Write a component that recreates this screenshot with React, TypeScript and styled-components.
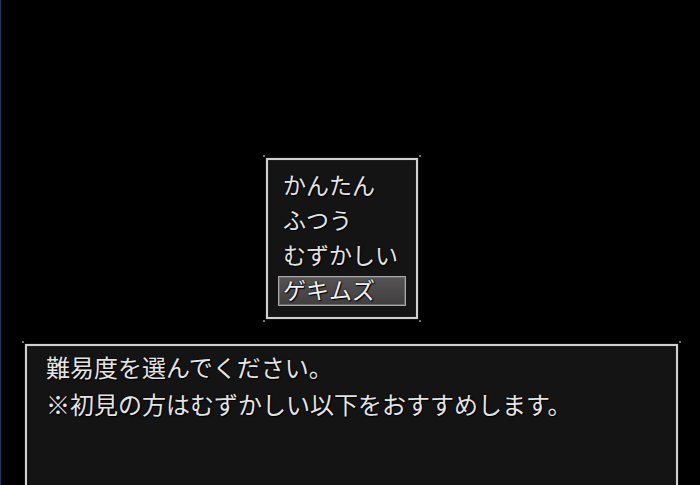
import React from "react";
import styled, { createGlobalStyle } from "styled-components";

const Global = createGlobalStyle`
  html, body {
    margin: 0;
    padding: 0;
    background: #000;
  }
  body {
    font-family: "Noto Sans CJK JP", "Noto Sans", sans-serif;
  }
`;

const Screen = styled.div`
  width: 700px;
  height: 485px;
  box-sizing: border-box;
  border-left: 1px solid #143a6c;
  background: #000;
  overflow: hidden;
  display: flex;
  flex-direction: column;
`;

const Frame = styled.div<{ $w: number; $h?: number }>`
  position: relative;
  box-sizing: border-box;
  width: ${(p) => p.$w}px;
  ${(p) => (p.$h ? `height: ${p.$h}px;` : "")}
  border: 2px solid #cfcfcf;
  box-shadow: 0 0 1px 0 #777, inset 0 0 1px 0 #777;
  background: #141414;
  color: #e4e4e4;
  text-shadow: 0 0 2px #000, 1px 1px 1px #000;
`;

const Dot = styled.span<{ $x: "left" | "right"; $y: "top" | "bottom" }>`
  position: absolute;
  width: 2px;
  height: 2px;
  border-radius: 1px;
  background: #9a9a9a;
  ${(p) => p.$x}: -5px;
  ${(p) => p.$y}: -5px;
`;

const Corners = () => (
  <>
    <Dot $x="left" $y="top" />
    <Dot $x="right" $y="top" />
    <Dot $x="left" $y="bottom" />
    <Dot $x="right" $y="bottom" />
  </>
);

const MenuFrame = styled(Frame)`
  margin: 158px 0 0 265px;
  padding: 11px 10px;
  display: flex;
  flex-direction: column;
  gap: 5px;
`;

const Choice = styled.div<{ $active?: boolean }>`
  box-sizing: border-box;
  height: 30px;
  padding-left: 4px;
  font-size: 23px;
  line-height: 25px;
  white-space: nowrap;
  border: 1px solid ${(p) => (p.$active ? "#a8a8a8" : "transparent")};
  background: ${(p) =>
    p.$active ? "linear-gradient(#555353, #403e3e)" : "transparent"};
  box-shadow: ${(p) => (p.$active ? "inset 0 0 0 1px #6a6a6a" : "none")};
  color: ${(p) => (p.$active ? "#f0f0f0" : "#e4e4e4")};
`;

const MessageFrame = styled(Frame)`
  margin: 25px 0 0 24px;
  flex: 1 0 auto;
  height: 160px;
  padding: 2px 19px;
  font-size: 24px;
  line-height: 37px;
`;

const Line = styled.div`
  white-space: nowrap;
`;

const choices = ["かんたん", "ふつう", "むずかしい", "ゲキムズ"];

export default function App() {
  return (
    <>
      <Global />
      <Screen>
        <MenuFrame $w={152} $h={161}>
          <Corners />
          {choices.map((c, i) => (
            <Choice key={c} $active={i === 3}>
              {c}
            </Choice>
          ))}
        </MenuFrame>
        <MessageFrame $w={653}>
          <Corners />
          <Line>難易度を選んでください。</Line>
          <Line>※初見の方はむずかしい以下をおすすめします。</Line>
        </MessageFrame>
      </Screen>
    </>
  );
}
